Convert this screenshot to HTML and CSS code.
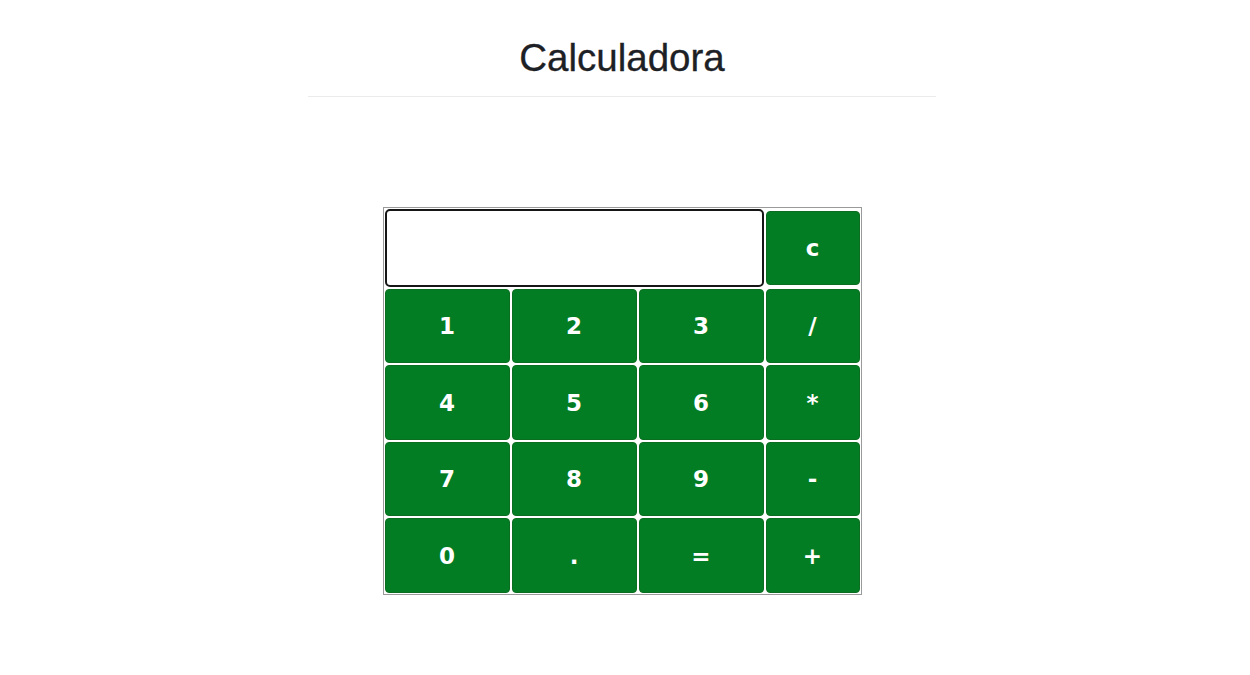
FILE: index.html
```html
<!DOCTYPE html>
<html lang="es">
<head>
<meta charset="utf-8">
<title>Calculadora</title>
<link rel="stylesheet" href="styles.css">
</head>
<body>
<div class="page">
  <header class="header">
    <h1 class="title">Calculadora</h1>
    <hr class="rule">
  </header>
  <div class="calc">
    <input class="display" type="text">
    <button class="key key-clear">c</button>
    <button class="key">1</button>
    <button class="key">2</button>
    <button class="key">3</button>
    <button class="key">/</button>
    <button class="key">4</button>
    <button class="key">5</button>
    <button class="key">6</button>
    <button class="key">*</button>
    <button class="key">7</button>
    <button class="key">8</button>
    <button class="key">9</button>
    <button class="key">-</button>
    <button class="key">0</button>
    <button class="key">.</button>
    <button class="key">=</button>
    <button class="key">+</button>
  </div>
</div>
</body>
</html>
```
FILE: styles.css
```css
html, body {
  margin: 0;
  padding: 0;
  background: #fff;
}
body {
  padding-right: 6px;
  font-family: "Liberation Sans", Arial, sans-serif;
  color: #212529;
}
.page {
  display: flex;
  flex-direction: column;
  align-items: center;
}
.header {
  width: 628px;
  padding-top: 34px;
}
.title {
  margin: 0;
  font-size: 38.5px;
  line-height: 47px;
  font-weight: 400;
  text-align: center;
  color: #1d2125;
  -webkit-text-stroke: 0.3px #1d2125;
}
.rule {
  margin: 15px 0 0 0;
  border: 0;
  border-top: 1px solid #ebebeb;
  height: 0;
}
.calc {
  margin-top: 110px;
  display: grid;
  grid-template-columns: 125px 125px 125px 94px;
  grid-template-rows: 78px 74px 75px 74px 75px;
  gap: 2px;
  padding: 1px;
  border: 1px solid #9a9a9a;
}
.display {
  grid-column: 1 / 4;
  box-sizing: border-box;
  width: 100%;
  height: 100%;
  margin: 0;
  border: 2px solid #161616;
  border-radius: 5px;
  background: #fff;
  font-size: 24px;
  padding: 0 8px;
}
.key {
  box-sizing: border-box;
  width: 100%;
  height: 100%;
  margin: 0;
  padding: 0;
  border: 1px solid #0b6d1f;
  border-radius: 4px;
  background: #037d23;
  color: #fff;
  font-family: "DejaVu Sans", Verdana, sans-serif;
  font-weight: 700;
  font-size: 23px;
  cursor: pointer;
}
.key-clear {
  height: 74px;
  align-self: center;
}
```
